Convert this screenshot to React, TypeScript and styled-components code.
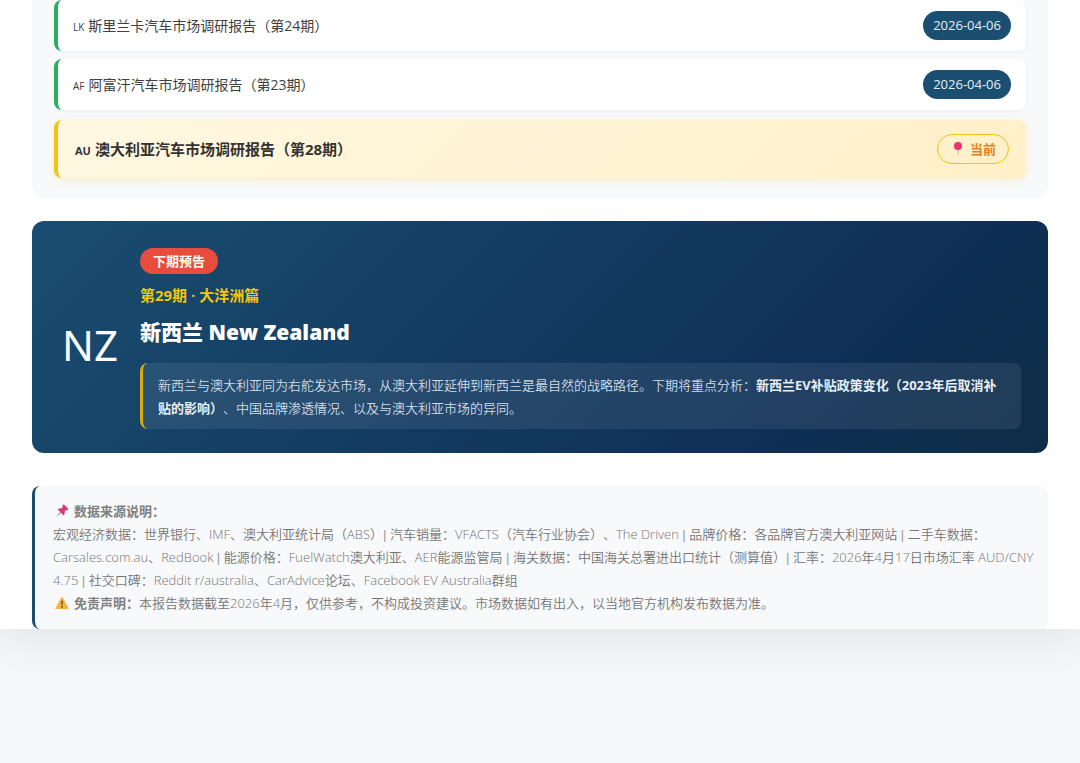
import React from "react";
import styled, { createGlobalStyle } from "styled-components";

const GlobalStyle = createGlobalStyle`
  * { box-sizing: border-box; }
  body {
    margin: 0;
    background: #f5f6fa;
    color: #333;
    font-family: "Open Sans", "Noto Sans CJK SC", sans-serif;
    text-spacing-trim: space-all;
  }
`;

const Screen = styled.div`
  min-height: 100vh;
  background: #f5f6fa;
`;

const Page = styled.main`
  padding: 0 32px;
  background: #fff;
  box-shadow: 0 8px 40px rgba(0, 0, 0, 0.08);
`;

const ReportPanel = styled.section`
  padding: 0 22px 20px;
  background: #f8f9fa;
  border-radius: 0 0 12px 12px;
`;

const ReportList = styled.ul`
  display: flex;
  flex-direction: column;
  gap: 8px;
  margin: 0;
  padding: 0;
  list-style: none;
`;

const ReportItem = styled.li<{ $current?: boolean }>`
  display: flex;
  align-items: center;
  justify-content: space-between;
  min-height: ${(p) => (p.$current ? 58 : 51)}px;
  margin-top: ${(p) => (p.$current ? 2 : 0)}px;
  padding: ${(p) => (p.$current ? "0 17px" : "0 15px")};
  border-left: ${(p) => (p.$current ? "4px solid #f1c40f" : "4px solid #27ae60")};
  border-radius: 8px;
  background: ${(p) => (p.$current ? "linear-gradient(135deg, #fff8e1, #fff0c8)" : "#fff")};
  box-shadow: ${(p) =>
    p.$current ? "0 2px 8px rgba(241, 196, 15, 0.2)" : "0 1px 4px rgba(0, 0, 0, 0.05)"};
  color: ${(p) => (p.$current ? "#333" : "#404040")};
  font-size: ${(p) => (p.$current ? 15 : 14)}px;
  font-weight: ${(p) => (p.$current ? 700 : 400)};
`;

const ReportName = styled.span`
  padding-bottom: 2px;
`;

const CountryCode = styled.span<{ $current?: boolean }>`
  margin-right: 4px;
  font-size: ${(p) => (p.$current ? 11 : 10)}px;
`;

const DatePill = styled.time`
  padding: 0 10px;
  border-radius: 15px;
  background: #1b4f72;
  color: #e6eef4;
  font-size: 13px;
  line-height: 29px;
`;

const CurrentPill = styled.span`
  display: flex;
  align-items: center;
  gap: 4px;
  padding: 0 12px;
  border: 1px solid #f1c40f;
  border-radius: 15px;
  color: #e67e22;
  font-size: 13px;
  line-height: 28px;
`;

const Preview = styled.section`
  display: flex;
  align-items: center;
  gap: 22px;
  margin-top: 23px;
  padding: 27px 27px 24px 30px;
  border-radius: 12px;
  background: linear-gradient(135deg, #1a4d71 0%, #0f3057 75%, #0d2d47 100%);
  color: #fff;
`;

const PreviewCode = styled.div`
  padding-top: 12px;
  font-family: "Noto Sans", sans-serif;
  font-size: 42px;
  line-height: 54px;
`;

const PreviewBody = styled.div`
  flex: 1;
  min-width: 0;
`;

const PreviewTag = styled.span`
  display: block;
  width: fit-content;
  padding: 0 13px;
  border-radius: 13px;
  background: #e74c3c;
  font-size: 13px;
  font-weight: 700;
  line-height: 26px;
`;

const PreviewIssue = styled.p`
  margin: 9px 0 0;
  color: #f1c40f;
  font-size: 15px;
  font-weight: 700;
  line-height: 24px;
`;

const PreviewTitle = styled.h2`
  margin: 8px 0 0;
  font-size: 21px;
  font-weight: 800;
  line-height: 34px;
`;

const PreviewNote = styled.p`
  margin: 14px 0 0;
  padding: 11px 15px 9px;
  border-left: 3px solid #d4ac0d;
  border-radius: 8px;
  background: rgba(255, 255, 255, 0.08);
  color: #d1dce6;
  font-size: 13px;
  font-weight: 350;
  line-height: 23px;

  strong {
    color: #e8eef3;
    font-weight: 700;
  }
`;

const Sources = styled.footer`
  margin-top: 33px;
  padding: 14px 8px 14px 18px;
  border-left: 3px solid #1b4f72;
  border-radius: 8px;
  background: #f8f9fa;
  color: #757575;
  font-size: 13px;
  font-weight: 350;
  line-height: 23px;

  p { margin: 0; }

  strong {
    color: #808080;
    font-weight: 700;
  }
`;

const Separator = styled.span`
  color: #999;
  font-family: "Liberation Sans", sans-serif;
`;

const NoteIcon = styled.svg`
  margin: 0 5px 0 2px;
  vertical-align: -2px;
`;

const reports = [
  { code: "LK", name: "斯里兰卡汽车市场调研报告（第24期）", date: "2026-04-06" },
  { code: "AF", name: "阿富汗汽车市场调研报告（第23期）", date: "2026-04-06" },
];

const sources = [
  "宏观经济数据：世界银行、IMF、澳大利亚统计局（ABS）",
  "汽车销量：VFACTS（汽车行业协会）、The Driven ",
  "品牌价格：各品牌官方澳大利亚网站 ",
  "二手车数据：Carsales.com.au、RedBook ",
  "能源价格：FuelWatch澳大利亚、AER能源监管局 ",
  "海关数据：中国海关总署进出口统计（测算值）",
  "汇率：2026年4月17日市场汇率 AUD/CNY 4.75 ",
  "社交口碑：Reddit r/australia、CarAdvice论坛、Facebook EV Australia群组",
];

const RoundPin = () => (
  <svg width="16" height="16" viewBox="0 0 16 16" aria-hidden="true">
    <path d="M7.5 8h1l-.2 6h-.6z" fill="#9aa0a6" />
    <circle cx="8" cy="5" r="4" fill="#e8336d" />
  </svg>
);

const PushPin = () => (
  <NoteIcon width="14" height="14" viewBox="0 0 14 14" aria-hidden="true">
    <path d="M5.200 7.800 1 13l5.200-4.200z" fill="#8a9299" />
    <path
      d="M7.800.9c.5-.6 1.100-.4 1.600.1l3.400 3.400c.5.5.6 1.100.1 1.500-.5.4-1.100.3-1.700.1L9.500 7.700c.4 1.400.2 2.700-.8 3.700L2.500 5.300c1.100-1 2.400-1.100 3.700-.7L7.900 2.700c-.3-.6-.4-1.300-.1-1.800z"
      fill="#e0366f"
    />
  </NoteIcon>
);

const Warning = () => (
  <NoteIcon width="14" height="14" viewBox="0 0 14 14" aria-hidden="true">
    <path d="M6.300 1.600a.8.8 0 0 1 1.400 0l5.800 10.300a.8.8 0 0 1-.7 1.200H1.200a.8.8 0 0 1-.7-1.200z" fill="#fbb040" />
    <path d="M6.200 4.800h1.600l-.3 4.200h-1z" fill="#4a4038" />
    <circle cx="7" cy="10.700" r=".9" fill="#4a4038" />
  </NoteIcon>
);

export default function App() {
  return (
    <Screen>
      <GlobalStyle />
      <Page>
        <ReportPanel>
          <ReportList>
            {reports.map((r) => (
              <ReportItem key={r.code}>
                <ReportName>
                  <CountryCode>{r.code}</CountryCode>
                  {r.name}
                </ReportName>
                <DatePill dateTime={r.date}>{r.date}</DatePill>
              </ReportItem>
            ))}
            <ReportItem $current>
              <ReportName>
                <CountryCode $current>AU</CountryCode>
                澳大利亚汽车市场调研报告（第28期）
              </ReportName>
              <CurrentPill>
                <RoundPin />
                当前
              </CurrentPill>
            </ReportItem>
          </ReportList>
        </ReportPanel>

        <Preview>
          <PreviewCode>NZ</PreviewCode>
          <PreviewBody>
            <PreviewTag>下期预告</PreviewTag>
            <PreviewIssue>第29期 · 大洋洲篇</PreviewIssue>
            <PreviewTitle>新西兰 New Zealand</PreviewTitle>
            <PreviewNote>
              新西兰与澳大利亚同为右舵发达市场，从澳大利亚延伸到新西兰是最自然的战略路径。下期将重点分析：
              <strong>新西兰EV补贴政策变化（2023年后取消补贴的影响）</strong>
              、中国品牌渗透情况、以及与澳大利亚市场的异同。
            </PreviewNote>
          </PreviewBody>
        </Preview>

        <Sources>
          <p>
            <PushPin />
            <strong>数据来源说明：</strong>
          </p>
          <p>
            {sources.map((text, i) => (
              <React.Fragment key={text}>
                {i > 0 && <Separator>| </Separator>}
                {text}
              </React.Fragment>
            ))}
          </p>
          <p>
            <Warning />
            <strong>免责声明：</strong>
            本报告数据截至2026年4月，仅供参考，不构成投资建议。市场数据如有出入，以当地官方机构发布数据为准。
          </p>
        </Sources>
      </Page>
    </Screen>
  );
}
